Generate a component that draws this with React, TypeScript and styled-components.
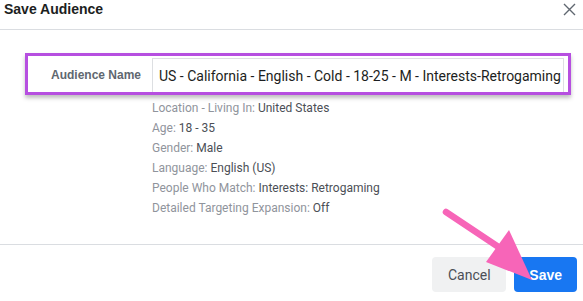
import styled, { createGlobalStyle } from "styled-components";

const GlobalStyle = createGlobalStyle`
  html, body {
    margin: 0;
    padding: 0;
    background: #fff;
  }
`;

const details = [
  { label: "Location - Living In:", value: "United States" },
  { label: "Age:", value: "18 - 35" },
  { label: "Gender:", value: "Male" },
  { label: "Language:", value: "English (US)" },
  { label: "People Who Match:", value: "Interests: Retrogaming" },
  { label: "Detailed Targeting Expansion:", value: "Off" },
];

const App = () => {
  return (
    <>
      <GlobalStyle />
      <Dialog>
        <Header>
          <Title>Save Audience</Title>
          <CloseBtn aria-label="Close">
            <svg width="13" height="13" viewBox="0 0 13 13">
              <path d="M1 1 L12 12 M12 1 L1 12" stroke="#606770" strokeWidth="1.4" />
            </svg>
          </CloseBtn>
        </Header>
        <Body>
          <Highlight>
            <Label>Audience Name</Label>
            <NameInput>US - California - English - Cold - 18-25 - M - Interests-Retrogaming</NameInput>
          </Highlight>
          <DetailList>
            {details.map((d) => (
              <DetailRow key={d.label}>
                <DetailLabel>{d.label}</DetailLabel> <DetailValue>{d.value}</DetailValue>
              </DetailRow>
            ))}
          </DetailList>
        </Body>
        <Footer>
          <Button>Cancel</Button>
          <Button $primary>Save</Button>
        </Footer>
        <Arrow width="583" height="301" viewBox="0 0 583 301">
          <line x1="446" y1="212" x2="500" y2="248" stroke="#f765b8" strokeWidth="6.5" strokeLinecap="round" />
          <polygon points="509,230 486,262 532,280" fill="#f765b8" />
        </Arrow>
      </Dialog>
    </>
  );
};

const Dialog = styled.div`
  position: relative;
  width: 583px;
  height: 301px;
  background: #fff;
  overflow: hidden;
  font-family: Roboto, "Liberation Sans", sans-serif;
`;

const Header = styled.div`
  display: flex;
  align-items: center;
  justify-content: space-between;
  height: 30px;
  padding: 0 7px 0 4px;
  border-bottom: 1px solid #dadde1;
  box-sizing: border-box;
`;

const Title = styled.h1`
  margin: 0 0 12px;
  font-family: "Liberation Sans", Arial, sans-serif;
  font-size: 14px;
  font-weight: bold;
  color: #1c1e21;
`;

const CloseBtn = styled.button`
  display: flex;
  padding: 0;
  margin-bottom: 10px;
  border: none;
  background: none;
`;

const Body = styled.div`
  padding: 23px 0 0 25px;
  height: 215px;
  box-sizing: border-box;
  border-bottom: 1px solid #dadde1;
`;

const Highlight = styled.div`
  display: flex;
  align-items: stretch;
  width: 546px;
  height: 42px;
  box-sizing: border-box;
  border: 3px solid #b64fe0;
  box-shadow: 0 3px 4px rgba(0, 0, 0, 0.25);
  padding: 2px 4px 0 0;
`;

const Label = styled.div`
  width: 124px;
  padding-right: 11px;
  box-sizing: border-box;
  text-align: right;
  align-self: center;
  font-family: "Liberation Sans", Arial, sans-serif;
  font-size: 12px;
  font-weight: bold;
  color: #606770;
`;

const NameInput = styled.div`
  flex: 1;
  display: flex;
  align-items: center;
  padding-left: 6px;
  border: 1px solid #dddfe2;
  border-bottom: none;
  font-size: 14px;
  color: #1c1e21;
  white-space: nowrap;
  overflow: hidden;
`;

const DetailList = styled.div`
  margin: 3px 0 0 127px;
  display: flex;
  flex-direction: column;
`;

const DetailRow = styled.div`
  height: 20px;
  line-height: 20px;
  font-size: 12px;
`;

const DetailLabel = styled.span`
  color: #90949c;
`;

const DetailValue = styled.span`
  color: #4b4f56;
`;

const Footer = styled.div`
  display: flex;
  justify-content: flex-end;
  gap: 8px;
  padding: 12px 6px 0 0;
`;

const Button = styled.button<{ $primary?: boolean }>`
  height: 35px;
  padding: 0 15px;
  min-width: ${({ $primary }) => ($primary ? "62px" : "74px")};
  border: none;
  border-radius: 4px;
  font-size: 14px;
  font-family: ${({ $primary }) => ($primary ? '"Liberation Sans", Arial, sans-serif' : "Roboto, sans-serif")};
  font-weight: ${({ $primary }) => ($primary ? "bold" : "normal")};
  background: ${({ $primary }) => ($primary ? "#1877f2" : "#f0f1f2")};
  color: ${({ $primary }) => ($primary ? "#fff" : "#4b4f56")};
`;

const Arrow = styled.svg`
  position: absolute;
  top: 0;
  left: 0;
  pointer-events: none;
`;

export default App;
